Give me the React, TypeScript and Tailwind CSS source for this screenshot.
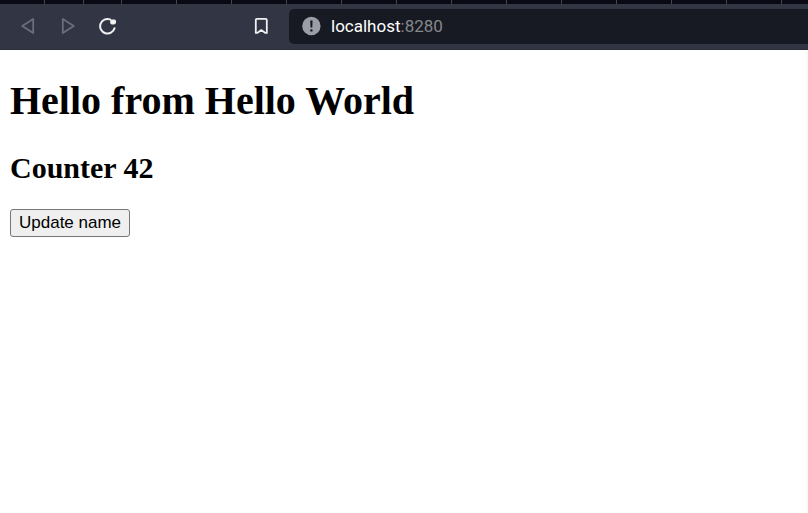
import { useState } from "react";

const pinnedTabs = [45, 39, 38];
const openTabs = Array.from({ length: 24 }, (_, i) => i);

function TabStrip() {
  return (
    <div className="flex h-1 overflow-hidden bg-[#0b0a14]">
      {pinnedTabs.map((width) => (
        <div key={width} className="shrink-0 border-r border-[#45454a]" style={{ width }} />
      ))}
      {openTabs.map((tab) => (
        <div key={tab} className="w-[55px] shrink-0 border-r border-[#45454a]" />
      ))}
    </div>
  );
}

function BackIcon() {
  return (
    <svg viewBox="0 0 16 18" className="h-[18px] w-4" fill="none" stroke="#6c6e79" strokeWidth="1.8" strokeLinejoin="round" aria-hidden="true">
      <path d="M13.2 1.9v14.2L2.2 9z" />
    </svg>
  );
}

function ForwardIcon() {
  return (
    <svg viewBox="0 0 16 18" className="h-[18px] w-4" fill="none" stroke="#6c6e79" strokeWidth="1.8" strokeLinejoin="round" aria-hidden="true">
      <path d="M2.8 1.9v14.2L13.8 9z" />
    </svg>
  );
}

function ReloadIcon() {
  return (
    <svg viewBox="0 0 20 18" className="h-[18px] w-5" fill="none" aria-hidden="true">
      <path d="M12 2.4A7.3 7.3 0 1 0 16.5 11.2" stroke="#f1f1f2" strokeWidth="2" strokeLinecap="round" />
      <path d="M13 2.4h3.4a1.6 1.6 0 0 1 1.6 1.6v1.2a2.4 2.4 0 0 1-2.4 2.4h-1.6a1.8 1.8 0 0 1-1.8-1.8V3.2z" fill="#f1f1f2" />
    </svg>
  );
}

function BookmarkIcon() {
  return (
    <svg viewBox="0 0 16 18" className="h-[18px] w-4" fill="none" stroke="#f1f1f2" strokeWidth="1.8" strokeLinejoin="round" aria-hidden="true">
      <path d="M4 1.9h8.6a1.2 1.2 0 0 1 1.2 1.2v12.8h-1.4l-4.1-2.8-4.1 2.8H2.8V3.1A1.2 1.2 0 0 1 4 1.9z" />
    </svg>
  );
}

function SiteInfoIcon() {
  return (
    <svg viewBox="0 0 20 20" className="size-5" aria-hidden="true">
      <circle cx="10.4" cy="10" r="9.2" fill="#9b9da7" />
      <path d="M9.2 4.6h2.4l-.3 6.8H9.5z" fill="#171a22" />
      <circle cx="10.4" cy="14.4" r="1.2" fill="#171a22" />
    </svg>
  );
}

function AddressBar() {
  const [editing, setEditing] = useState(false);
  const [port, setPort] = useState("8280");
  const [host, setHost] = useState("localhost");

  const commit = (value: string) => {
    const [nextHost, nextPort = ""] = value.split(":");
    setHost(nextHost);
    setPort(nextPort);
    setEditing(false);
  };

  return (
    <div className="flex h-[35px] min-w-0 flex-1 items-center gap-2.5 rounded-l-[5px] bg-[#171a22] pb-px pl-3 font-[Roboto,'Noto_Sans',sans-serif] text-[17px] leading-6">
      <button type="button" aria-label="Site information" className="shrink-0">
        <SiteInfoIcon />
      </button>
      {editing ? (
        <input
          autoFocus
          aria-label="Address"
          defaultValue={`${host}:${port}`}
          onBlur={(event) => commit(event.target.value)}
          className="min-w-0 flex-1 bg-transparent text-white outline-none"
        />
      ) : (
        <button type="button" onClick={() => setEditing(true)} className="min-w-0 flex-1 cursor-text text-left text-white">
          {host}
          <span className="text-[#86888c]">:{port}</span>
        </button>
      )}
    </div>
  );
}

function Toolbar() {
  return (
    <nav aria-label="Browser" className="flex h-[46px] items-center border-b border-[#2c2d3b] bg-[#323544] pl-5">
      <div className="flex w-[233px] shrink-0 items-center gap-6 pb-0.5">
        <button type="button" aria-label="Back">
          <BackIcon />
        </button>
        <button type="button" aria-label="Forward">
          <ForwardIcon />
        </button>
        <button type="button" aria-label="Reload" className="-ml-0.5">
          <ReloadIcon />
        </button>
      </div>
      <button type="button" aria-label="Bookmark" className="mr-5 shrink-0 pb-0.5">
        <BookmarkIcon />
      </button>
      <AddressBar />
    </nav>
  );
}

export default function App() {
  const [name, setName] = useState("Hello World");

  return (
    <div className="flex min-h-screen flex-col bg-white">
      <header>
        <TabStrip />
        <Toolbar />
      </header>
      <main className="flex flex-1 flex-col items-start border-r-2 border-[#fafafa] px-2.5 pt-7 font-['Liberation_Serif',serif] font-bold text-black">
        <h1 className="text-[40px] leading-[46px]">Hello from {name}</h1>
        <h2 className="mt-[26px] text-[30px] leading-9">Counter 42</h2>
        <button
          type="button"
          onClick={() => setName("World")}
          className="mt-[23px] h-7 rounded-[3px] border border-[#767676] bg-[#efefef] px-2 font-['Liberation_Sans',sans-serif] text-[17px] leading-5 font-normal"
        >
          Update name
        </button>
      </main>
    </div>
  );
}
